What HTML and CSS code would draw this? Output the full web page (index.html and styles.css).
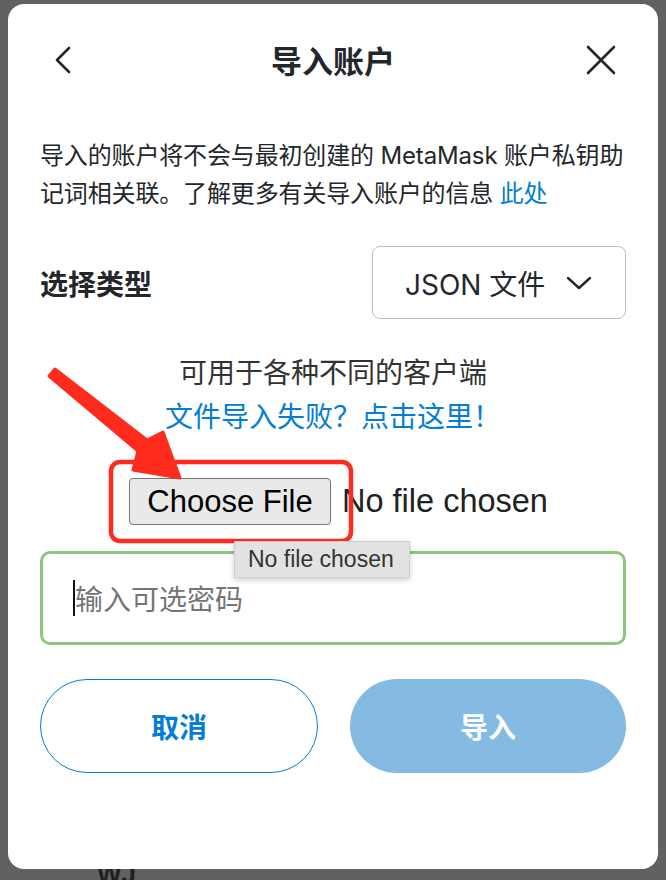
FILE: index.html
```html
<!DOCTYPE html>
<html lang="zh">
<head>
<meta charset="utf-8">
<title>导入账户</title>
<link rel="stylesheet" href="styles.css">
</head>
<body>
<div class="card">
  <div class="header">
    <svg class="back" width="20" height="28" viewBox="0 0 20 28"><path d="M15 2 L3 14 L15 26" fill="none" stroke="#24272a" stroke-width="2.6" stroke-linecap="round" stroke-linejoin="round"/></svg>
    <div class="title">导入账户</div>
    <svg class="close" width="30" height="30" viewBox="0 0 30 30"><path d="M2 2 L28 28 M28 2 L2 28" fill="none" stroke="#24272a" stroke-width="2.6" stroke-linecap="round"/></svg>
  </div>
  <p class="intro">导入的账户将不会与最初创建的 MetaMask 账户私钥助记词相关联。了解更多有关导入账户的信息 <span class="link">此处</span></p>
  <div class="select-row">
    <div class="label">选择类型</div>
    <div class="dropdown">
      <span>JSON 文件</span>
      <svg width="26" height="16" viewBox="0 0 26 16"><path d="M2 3 L13 13 L24 3" fill="none" stroke="#24272a" stroke-width="2.4" stroke-linecap="round" stroke-linejoin="round"/></svg>
    </div>
  </div>
  <div class="center-text">
    <div class="info">可用于各种不同的客户端</div>
    <div class="link">文件导入失败？点击这里！</div>
  </div>
  <div class="file-row">
    <div class="file-btn">Choose File</div>
    <div class="file-name">No file chosen</div>
  </div>
  <div class="password"><span class="caret"></span><span class="placeholder">输入可选密码</span></div>
  <div class="actions">
    <div class="btn cancel">取消</div>
    <div class="btn import">导入</div>
  </div>

  <svg class="annot" width="666" height="880" viewBox="0 0 666 880">
    <rect x="111" y="462" width="240" height="79" rx="9" fill="none" stroke="#fe2b1e" stroke-width="4.5"/>
    <polygon points="55,369 147,440 163,432 180,478 133,470 138,451 49,376" fill="#fe2b1e" stroke="#fe2b1e" stroke-width="3" stroke-linejoin="round"/>
  </svg>
  <div class="tooltip">No file chosen</div>
</div>
<div class="behind">WJ</div>
</body>
</html>
```

FILE: styles.css
```css
html, body {
  margin: 0;
  padding: 0;
}
body {
  background: #616161;
  width: 666px;
  height: 880px;
  overflow: hidden;
  font-family: "Inter", "Noto Sans CJK SC", sans-serif;
  color: #24272a;
}
.card {
  position: relative;
  z-index: 1;
  margin: 4px 8px 0 8px;
  width: 650px;
  box-sizing: border-box;
  padding: 36px 32px 96px 32px;
  background: #fff;
  border-radius: 16px;
}
.header {
  display: grid;
  grid-template-columns: 1fr auto 1fr;
  align-items: center;
  height: 40px;
}
.back {
  justify-self: start;
  margin-left: 14px;
}
.close {
  justify-self: end;
  margin-right: 10px;
}
.title {
  font-family: "Noto Sans CJK SC", sans-serif;
  font-weight: 700;
  font-size: 31px;
  line-height: 40px;
  color: #24272a;
}
.intro {
  margin: 57px -4px 0 0;
  font-size: 24px;
  line-height: 38px;
  letter-spacing: -0.15px;
}
.link {
  color: #037dd6;
}
.select-row {
  margin-top: 33px;
  display: flex;
  justify-content: space-between;
  align-items: center;
}
.label {
  font-family: "Noto Sans CJK SC", sans-serif;
  font-weight: 700;
  font-size: 28px;
  line-height: 40px;
}
.dropdown {
  width: 254px;
  height: 73px;
  box-sizing: border-box;
  border: 1.5px solid #bbc0c5;
  border-radius: 8px;
  display: flex;
  align-items: center;
  justify-content: space-between;
  padding: 0 33px 0 32px;
  font-size: 28px;
}
.center-text {
  margin-top: 30px;
  text-align: center;
  font-family: "Noto Sans CJK SC", sans-serif;
  font-size: 28px;
  line-height: 44px;
}
.info {
  color: #333;
}
.file-row {
  margin-top: 41px;
  display: flex;
  align-items: center;
  padding-left: 89px;
  font-family: "Liberation Sans", Arial, sans-serif;
  font-size: 31px;
}
.file-btn {
  width: 202px;
  height: 47px;
  box-sizing: border-box;
  background: #e9e9e9;
  border: 1px solid #767676;
  border-radius: 4px;
  display: flex;
  align-items: center;
  justify-content: center;
  color: #000;
}
.file-name {
  margin-left: 11px;
  font-size: 32.5px;
  color: #222;
}
.password {
  margin-top: 26px;
  height: 94px;
  box-sizing: border-box;
  border: 3px solid #8cc77c;
  border-radius: 10px;
  display: flex;
  align-items: center;
  padding-left: 30px;
  font-family: "Noto Sans CJK SC", sans-serif;
  font-size: 28px;
}
.caret {
  width: 2px;
  height: 36px;
  background: #111;
}
.placeholder {
  color: #757575;
}
.actions {
  margin-top: 34px;
  display: flex;
  gap: 32px;
}
.btn {
  flex: 1;
  height: 94px;
  box-sizing: border-box;
  border-radius: 100px;
  display: flex;
  align-items: center;
  justify-content: center;
  font-family: "Noto Sans CJK SC", sans-serif;
  font-weight: 700;
  font-size: 28px;
}
.cancel {
  border: 1.5px solid #037dd6;
  color: #037dd6;
}
.import {
  background: #85bae3;
  color: #fff;
}
.annot {
  position: absolute;
  left: -8px;
  top: -4px;
  pointer-events: none;
}
.tooltip {
  position: absolute;
  left: 226px;
  top: 537px;
  width: 176px;
  height: 37px;
  box-sizing: border-box;
  background: #e3e2e2;
  border: 1px solid #d0cfcf;
  box-shadow: 0 2px 6px rgba(0, 0, 0, 0.2);
  font-family: "Liberation Sans", Arial, sans-serif;
  font-size: 23px;
  color: #333;
  padding-left: 13px;
  line-height: 35px;
}
.behind {
  position: relative;
  z-index: 0;
  margin-top: -10px;
  padding-left: 97px;
  font-family: "Liberation Sans", Arial, sans-serif;
  font-weight: 700;
  font-size: 26px;
  line-height: 30px;
  color: #1f1f1f;
}
```
